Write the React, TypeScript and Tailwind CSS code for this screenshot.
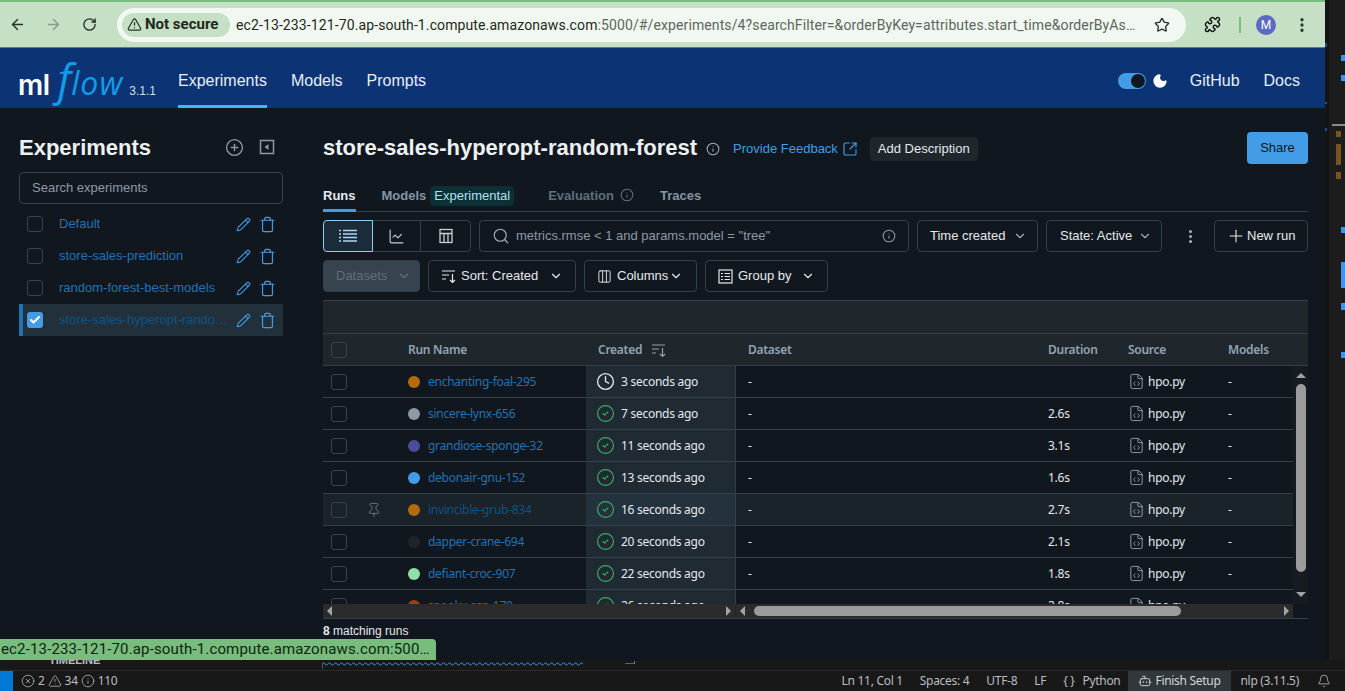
import React from "react";
import {
  ArrowLeft,
  ArrowRight,
  RotateCw,
  TriangleAlert,
  Star,
  Puzzle,
  EllipsisVertical,
  Moon,
  CirclePlus,
  Pencil,
  Trash,
  Info,
  SquareArrowOutUpRight,
  ChartLine,
  Search,
  ChevronDown,
  Plus,
  Columns3,
  Check,
  CircleCheck,
  Clock,
  Pin,
  FileCode,
  CircleX,
  Bell,
  Bot,
} from "lucide-react";

const experiments = [
  { name: "Default" },
  { name: "store-sales-prediction" },
  { name: "random-forest-best-models" },
  { name: "store-sales-hyperopt-random-forest", active: true },
];

const runs = [
  { name: "enchanting-foal-295", color: "bg-[#b36b0e]", created: "3 seconds ago", duration: "", running: true },
  { name: "sincere-lynx-656", color: "bg-[#8d9aa6]", created: "7 seconds ago", duration: "2.6s" },
  { name: "grandiose-sponge-32", color: "bg-[#4a4c9c]", created: "11 seconds ago", duration: "3.1s" },
  { name: "debonair-gnu-152", color: "bg-[#429de6]", created: "13 seconds ago", duration: "1.6s" },
  { name: "invincible-grub-834", color: "bg-[#b36b0e]", created: "16 seconds ago", duration: "2.7s", hover: true },
  { name: "dapper-crane-694", color: "bg-[#1f242b]", created: "20 seconds ago", duration: "2.1s" },
  { name: "defiant-croc-907", color: "bg-[#8fdfa6]", created: "22 seconds ago", duration: "1.8s" },
  { name: "spooky-asp-179", color: "bg-[#a63c0e]", created: "26 seconds ago", duration: "2.8s" },
];

const Tri = ({ dir }: { dir: "up" | "down" | "left" | "right" }) => {
  const points = {
    up: "0,8 5,3 10,8",
    down: "0,2 5,7 10,2",
    left: "7,0 2,5 7,10",
    right: "3,0 8,5 3,10",
  }[dir];
  return (
    <svg width="10" height="10" viewBox="0 0 10 10" className="shrink-0">
      <polygon points={points} fill="#a3a3a3" />
    </svg>
  );
};

const SortIcon = () => (
  <svg width="16" height="16" viewBox="0 0 16 16" fill="none" stroke="currentColor" strokeWidth="1.2" className="shrink-0">
    <path d="M1 3h13M1 7h7M1 11h4M11.5 6v8.5M9 12l2.5 2.5L14 12" />
  </svg>
);

const CollapseIcon = () => (
  <svg width="16" height="16" viewBox="0 0 16 16" fill="none" stroke="currentColor" strokeWidth="1.5">
    <rect x="1.5" y="1.5" width="13" height="13" />
    <polygon points="9.5,5 5.5,8 9.5,11" fill="currentColor" stroke="none" />
  </svg>
);

const ListIcon = () => (
  <svg width="18" height="16" viewBox="0 0 18 16" fill="none" stroke="currentColor" strokeWidth="1.3">
    <path d="M4 2.5h14M4 6h14M4 9.5h14M4 13h14" />
    <path d="M0 2.5h2M0 6h2M0 9.5h2M0 13h2" />
  </svg>
);

const TableIcon = () => (
  <svg width="16" height="16" viewBox="0 0 16 16" fill="none" stroke="currentColor" strokeWidth="1.3">
    <rect x="2" y="1.5" width="12" height="13" />
    <path d="M2 5.5h12M6 5.5v9M10 5.5v9" />
  </svg>
);

const GroupIcon = () => (
  <svg width="15" height="15" viewBox="0 0 15 15" fill="none" stroke="currentColor" strokeWidth="1.2" className="shrink-0">
    <rect x="1" y="1" width="13" height="13" />
    <path d="M3 4.5h2M3 7.5h2M3 10.5h2M6.5 4.5h5.5M6.5 7.5h5.5M6.5 10.5h5.5" />
  </svg>
);

const Outline = ({ className = "", children }: { className?: string; children: React.ReactNode }) => (
  <div className={`flex items-center h-8 rounded border border-[#333f4a] text-[13px] text-[#e5e9ec] whitespace-nowrap ${className}`}>
    {children}
  </div>
);

const Box = ({ className = "" }: { className?: string }) => (
  <div className={`w-4 h-4 rounded-[3px] border border-[#38424c] shrink-0 ${className}`} />
);

const ChromeBar = () => (
  <div className="h-12 shrink-0 bg-[#c5e0c5] border-t-2 border-[#78bd7d] border-b border-b-[#5f7d72] flex items-center font-['Roboto',sans-serif]">
    <ArrowLeft size={17} strokeWidth={2} className="ml-[9px] text-[#2a332b]" />
    <ArrowRight size={17} strokeWidth={2} className="ml-[19px] text-[#8b9a8b]" />
    <RotateCw size={15} strokeWidth={2.2} className="ml-[20px] text-[#2a332b]" />
    <div className="ml-[20px] w-[1069px] h-[34px] rounded-full bg-[#f1f8f1] flex items-center pl-[5px]">
      <div className="h-6 w-[108px] rounded-full bg-[#c5e0c5] flex items-center pl-[5px] gap-[3px] shrink-0">
        <TriangleAlert size={15} strokeWidth={2} className="text-[#2a332b]" />
        <span className="text-[15px] font-bold text-[#1f2820] whitespace-nowrap">Not secure</span>
      </div>
      <div className="ml-[6px] whitespace-nowrap text-sm tracking-[0.11px]">
        <span className="text-[#1f2820]">ec2-13-233-121-70.ap-south-1.compute.amazonaws.com</span>
        <span className="text-[#5d675e]">:5000/#/experiments/4?searchFilter=&amp;orderByKey=attributes.start_time&amp;orderByAs…</span>
      </div>
      <Star size={16} strokeWidth={2} className="ml-auto mr-[16px] text-[#2a332b] shrink-0" />
    </div>
    <Puzzle size={17} strokeWidth={2} className="ml-[18px] text-[#111]" />
    <div className="ml-[18px] w-0.5 h-4 bg-[#78bd7d]" />
    <div className="ml-[15px] w-5 h-5 rounded-full bg-[#5c6bc0] text-white text-xs flex items-center justify-center">M</div>
    <EllipsisVertical size={18} strokeWidth={2.4} className="ml-[17px] text-[#2a332b]" />
  </div>
);

const TopNav = () => (
  <div className="h-[60px] shrink-0 bg-[#0c3474] flex items-center pt-[6px] text-base text-[#e8eef4]">
    <div className="w-[178px] pl-[18px] -mt-[6px] flex items-baseline shrink-0 whitespace-nowrap">
      <span className="text-[28px] leading-none font-semibold text-white font-['Inter',sans-serif] tracking-[-0.5px]">ml</span>
      <span className="ml-[8px] text-[44px] leading-none italic text-[#129be8] font-['Open_Sans',sans-serif]">f</span>
      <span className="text-[32px] leading-none italic font-medium text-[#129be8] font-['Open_Sans',sans-serif] tracking-[1px]">low</span>
      <span className="ml-[6px] text-xs text-[#d5dde6]">3.1.1</span>
    </div>
    <div className="h-full flex items-center border-b-[3px] border-[#37bdf2] pt-[3px]">Experiments</div>
    <div className="ml-6">Models</div>
    <div className="ml-6">Prompts</div>
    <div className="ml-auto flex items-center">
      <div className="w-7 h-4 rounded-full bg-[#429de6] flex items-center justify-end pr-px">
        <div className="w-[14px] h-[14px] rounded-full bg-[#11171f]" />
      </div>
      <Moon size={16} fill="white" className="ml-[6px] text-white" />
      <span className="ml-[22px]">GitHub</span>
      <span className="ml-6 mr-[25px]">Docs</span>
    </div>
  </div>
);

const Sidebar = () => (
  <div className="w-[323px] shrink-0 pl-[19px] pr-10 pt-[23px]">
    <div className="flex items-center justify-between pr-2 h-8">
      <h2 className="text-[22px] font-bold text-[#eef1f3]">Experiments</h2>
      <div className="flex items-center gap-[15px] text-[#8d9aa6]">
        <CirclePlus size={19} strokeWidth={1.7} />
        <CollapseIcon />
      </div>
    </div>
    <div className="mt-[9px] h-8 rounded border border-[#38424c] pl-3 flex items-center text-[13px] text-[#8d9aa6]">Search experiments</div>
    <div className="mt-[4px]">
      {experiments.map((e) => (
        <div
          key={e.name}
          className={`h-8 flex items-center text-[13px] ${e.active ? "bg-[#22303c] border-l-4 border-[#2272b4] pl-1" : "pl-2"}`}
        >
          {e.active ? (
            <div className="w-4 h-4 rounded-[3px] bg-[#429de6] flex items-center justify-center shrink-0">
              <Check size={12} strokeWidth={4} className="text-white" />
            </div>
          ) : (
            <Box />
          )}
          <span className={`ml-4 w-[171px] truncate ${e.active ? "text-[#0d5483]" : "text-[#2272b4]"}`}>{e.name}</span>
          <Pencil size={15} strokeWidth={1.7} className="ml-[6px] text-[#429de6] shrink-0" />
          <Trash size={17} strokeWidth={1.7} className="ml-[8px] text-[#429de6] shrink-0" />
        </div>
      ))}
    </div>
  </div>
);

const RunsTable = () => (
  <div className="mt-2 h-[319px] flex flex-col border-b border-[#333f4a] relative font-['Noto_Sans',sans-serif] text-xs tracking-[-0.27px]">
    <div className="h-[34px] shrink-0 bg-[#1f272d] border-t border-b border-[#333f4a]" />
    <div className="h-8 shrink-0 bg-[#1f272d] border-b border-[#333f4a] flex items-center font-semibold text-[#92a4b3]">
      <div className="w-[85px] pl-2">
        <Box />
      </div>
      <div className="w-[178px]">Run Name</div>
      <div className="w-[150px] pl-3 flex items-center gap-[9px]">
        Created
        <SortIcon />
      </div>
      <div className="w-[312px] pl-3">Dataset</div>
      <div className="w-20">Duration</div>
      <div className="w-[100px]">Source</div>
      <div>Models</div>
    </div>
    <div className="h-[238px] shrink-0 overflow-hidden pr-[15px]">
      {runs.map((r) => (
        <div
          key={r.name}
          className={`h-8 flex items-center border-b border-[#333f4a] text-[#e5e9ec] ${r.hover ? "bg-[#1a222a]" : ""}`}
        >
          <div className="w-[45px] pl-2 shrink-0">
            <Box />
          </div>
          <div className="w-10 shrink-0">
            {r.hover && <Pin size={16} strokeWidth={1.4} className="ml-[-2px] text-[#6b7885]" />}
          </div>
          <div className="w-[178px] shrink-0 flex items-center">
            <div className={`w-3 h-3 rounded-full shrink-0 ${r.color}`} />
            <span className={`ml-2 ${r.hover ? "text-[#0d5483]" : "text-[#2272b4]"}`}>{r.name}</span>
          </div>
          <div className={`w-[150px] shrink-0 h-full pl-[10px] flex items-center gap-[6px] border-r border-[#333f4a] ${r.hover ? "bg-[#24323d]" : "bg-[#1f2a33]"}`}>
            {r.running ? (
              <Clock size={19} strokeWidth={1.7} className="text-[#e5e9ec]" />
            ) : (
              <CircleCheck size={19} strokeWidth={1.5} className="text-[#3caa60]" />
            )}
            {r.created}
          </div>
          <div className="w-[312px] shrink-0 pl-3">-</div>
          <div className="w-20 shrink-0">{r.duration}</div>
          <div className="w-[100px] shrink-0 flex items-center gap-[3px]">
            <FileCode size={17} strokeWidth={1.4} className="text-[#8d9aa6]" />
            <span>hpo.py</span>
          </div>
          <div>-</div>
        </div>
      ))}
    </div>
    {/* native scrollbars sit on top of the grid */}
    <div className="absolute right-0 top-[66px] bottom-[14px] w-[15px] bg-[#161b21] flex flex-col items-center justify-between pt-1 pb-1">
      <Tri dir="up" />
      <div className="w-[10px] flex-1 mt-1 mb-[18px] rounded-full bg-[#9b9b9b]" />
      <Tri dir="down" />
    </div>
    <div className="absolute left-0 right-[15px] bottom-0 h-[14px] bg-[#2b2b2b] flex items-center">
      <div className="w-[413px] shrink-0 flex items-center justify-between px-[2px] border-r border-[#222]">
        <Tri dir="left" />
        <Tri dir="right" />
      </div>
      <div className="flex-1 flex items-center px-[2px]">
        <Tri dir="left" />
        <div className="ml-[6px] w-[427px] h-[10px] rounded-full bg-[#9b9b9b]" />
        <div className="flex-1" />
        <Tri dir="right" />
      </div>
    </div>
  </div>
);

const MainPanel = () => (
  <div className="w-[985px] shrink-0 pt-[24px] text-[13px]">
    <div className="flex items-start h-8">
      <h1 className="text-[22px] leading-8 font-bold text-[#eef1f3] whitespace-nowrap">store-sales-hyperopt-random-forest</h1>
      <div className="h-8 mt-px flex items-center">
        <Info size={14} strokeWidth={1.8} className="ml-[9px] text-[#a3aeb8]" />
        <span className="ml-[13px] text-[#429de6]">Provide Feedback</span>
        <SquareArrowOutUpRight size={16} strokeWidth={1.7} className="ml-[4px] text-[#429de6]" />
        <div className="ml-[12px] h-6 px-2 rounded bg-[#1f272d] flex items-center text-[#e5e9ec]">Add Description</div>
      </div>
      <div className="ml-auto h-8 w-[61px] rounded bg-[#429de6] text-[#11171c] flex items-center justify-center">Share</div>
    </div>
    <div className="mt-[15px] h-[33px] border-b border-[#333f4a] flex font-bold text-[#6f7f8d]">
      <div className="h-[33px] pt-[7px] border-b-[3px] border-[#429de6] text-[#e5e9ec]">Runs</div>
      <div className="ml-[26px] pt-[7px] text-[#8396a5]">Models</div>
      <div className="ml-1 mt-[7px] h-5 px-1 rounded bg-[#0d2f36] text-[#a9e3f5] font-normal flex items-center">Experimental</div>
      <div className="ml-[34px] pt-[7px] text-[#5f6f7c] flex items-start gap-[6px]">
        Evaluation
        <Info size={14} strokeWidth={1.8} className="mt-[2px]" />
      </div>
      <div className="ml-[26px] pt-[7px] text-[#8396a5]">Traces</div>
    </div>
    <div className="mt-2 flex items-center">
      <div className="flex h-8 w-[148px] rounded border border-[#333f4a]">
        <div className="w-[50px] -m-px rounded-l border border-[#8fcdf5] bg-[#1c2b3a] flex items-center justify-center text-[#a9d8f7]">
          <ListIcon />
        </div>
        <div className="w-12 ml-px border-r border-[#333f4a] flex items-center justify-center text-[#c8d0d6]">
          <ChartLine size={17} strokeWidth={1.6} />
        </div>
        <div className="flex-1 flex items-center justify-center text-[#c8d0d6]">
          <TableIcon />
        </div>
      </div>
      <Outline className="ml-2 w-[430px] pl-[12px] pr-[13px]">
        <Search size={18} strokeWidth={1.5} className="text-[#a3aeb8]" />
        <span className="ml-[6px] text-[#8d9aa6]">metrics.rmse &lt; 1 and params.model = "tree"</span>
        <Info size={14} strokeWidth={1.8} className="ml-auto -mr-[1px] text-[#8d9aa6]" />
      </Outline>
      <Outline className="ml-2 w-[121px] pl-3 pr-[10px] justify-between">
        Time created
        <ChevronDown size={14} className="text-[#a3aeb8]" />
      </Outline>
      <Outline className="ml-2 w-[116px] pl-[13px] pr-[9px] justify-between">
        State: Active
        <ChevronDown size={14} className="text-[#a3aeb8]" />
      </Outline>
      <EllipsisVertical size={17} strokeWidth={2.4} className="ml-[20px] text-[#a3aeb8]" />
      <Outline className="ml-auto w-[94px] pl-[11px] gap-px">
        <Plus size={20} strokeWidth={1.3} />
        New run
      </Outline>
    </div>
    <div className="mt-2 flex items-center">
      <div className="w-[97px] h-8 rounded bg-[#37444f] border border-[#333f4a] text-[#5f6f7c] flex items-center justify-between pl-3 pr-2">
        Datasets
        <ChevronDown size={14} />
      </div>
      <Outline className="ml-2 w-[148px] pl-3 pr-3">
        <SortIcon />
        <span className="ml-[4px]">Sort: Created</span>
        <ChevronDown size={14} className="ml-auto" />
      </Outline>
      <Outline className="ml-2 w-[113px] pl-3">
        <Columns3 size={15} strokeWidth={1.5} />
        <span className="ml-[5px]">Columns</span>
        <ChevronDown size={14} className="ml-px" />
      </Outline>
      <Outline className="ml-2 w-[123px] pl-3 pr-3">
        <GroupIcon />
        <span className="ml-[5px]">Group by</span>
        <ChevronDown size={14} className="ml-auto" />
      </Outline>
    </div>
    <RunsTable />
    <div className="mt-[4px] text-xs text-[#e5e9ec]">
      <b>8</b> matching runs
    </div>
  </div>
);

const Minimap = () => (
  <svg width="20" height="660" viewBox="0 0 20 660" className="shrink-0 bg-[#1c1c1c]">
    <rect x="0" y="0" width="4" height="660" fill="#141414" />
    <rect x="7" y="124" width="13" height="2" fill="#8a8a8a" />
    <rect x="11" y="131" width="5" height="6" fill="#7a5420" />
    <rect x="11" y="144" width="5" height="21" fill="#7a5420" />
    <rect x="11" y="172" width="5" height="7" fill="#7a5420" />
    <rect x="16" y="55" width="4" height="6" fill="#3d94ee" />
    <rect x="16" y="75" width="4" height="6" fill="#3d94ee" />
    <rect x="16" y="227" width="4" height="6" fill="#3d94ee" />
    <rect x="16" y="262" width="4" height="26" fill="#3d94ee" />
    <rect x="16" y="303" width="4" height="7" fill="#3d94ee" />
    <rect x="16" y="352" width="4" height="6" fill="#3d94ee" />
    <rect x="0" y="43" width="2" height="4" fill="#1f4f8f" />
    <rect x="0" y="102" width="2" height="2" fill="#1f4f8f" />
    <rect x="0" y="128" width="2" height="3" fill="#1f4f8f" />
  </svg>
);

// squiggle under the editor line, poking out below the browser window
const Squiggle = () => (
  <svg width="320" height="9" viewBox="0 0 320 9" className="absolute left-[322px] top-0">
    <defs>
      <pattern id="wave" width="6" height="4" patternUnits="userSpaceOnUse" y="2">
        <path d="M0 2 Q1.5 0 3 2 T6 2" fill="none" stroke="#2f78c4" strokeWidth="1.1" />
      </pattern>
    </defs>
    <rect x="0" y="2" width="261" height="4" fill="url(#wave)" />
    <rect x="0" y="3" width="1" height="6" fill="#555" />
    <rect x="303" y="3" width="9" height="1" fill="#3d6a99" />
    <rect x="312" y="1" width="1" height="3" fill="#777" />
  </svg>
);

const StatusBar = () => (
  <div className="h-5 shrink-0 bg-[#181818] flex items-center text-xs tracking-[-0.3px] text-[#b9bec2] font-['Noto_Sans',sans-serif] whitespace-nowrap">
    <div className="w-[13px] h-full bg-[#0078d4]" />
    <div className="ml-2 flex items-center gap-[3px]">
      <CircleX size={14} strokeWidth={1.3} />
      <span>2</span>
      <TriangleAlert size={14} strokeWidth={1.3} />
      <span>34</span>
      <Info size={14} strokeWidth={1.3} />
      <span>110</span>
    </div>
    <div className="ml-auto flex items-center h-full">
      <span>Ln 11, Col 1</span>
      <span className="ml-[17px]">Spaces: 4</span>
      <span className="ml-[17px]">UTF-8</span>
      <span className="ml-[17px]">LF</span>
      <span className="ml-[17px]">{"{ }"}</span>
      <span className="ml-[8px]">Python</span>
      <div className="ml-[8px] h-full w-[103px] bg-[#31373b] flex items-center gap-[3px] pl-[10px] text-[#d4d8db]">
        <Bot size={14} strokeWidth={1.6} />
        Finish Setup
      </div>
      <span className="ml-[9px]">nlp (3.11.5)</span>
      <Bell size={14} strokeWidth={1.4} className="ml-[18px] mr-[14px]" />
    </div>
  </div>
);

export default function App() {
  return (
    <div className="relative w-[1345px] h-[691px] overflow-hidden flex flex-col bg-[#181818] font-['Liberation_Sans',sans-serif]">
      <div className="flex h-[660px] shrink-0">
        <div className="w-[1325px] shrink-0 flex flex-col bg-[#11171f]">
          <ChromeBar />
          <TopNav />
          <div className="flex flex-1 min-h-0">
            <Sidebar />
            <MainPanel />
          </div>
        </div>
        <Minimap />
      </div>
      <div className="h-[11px] shrink-0 bg-[#181818] border-b border-[#2b2b2b] relative text-[11px] leading-none font-bold text-[#b9bec2]">
        <span className="absolute left-[49px] -top-[5px]">TIMELINE</span>
        <Squiggle />
      </div>
      <StatusBar />
      {/* link preview bubble from the browser */}
      <div className="absolute left-0 top-[639px] w-[436px] h-[21px] rounded-tr bg-[#78bd7d] text-[#10240f] text-[15px] tracking-[0.15px] flex items-center pl-px font-['Roboto',sans-serif] whitespace-nowrap">
        ec2-13-233-121-70.ap-south-1.compute.amazonaws.com:500…
      </div>
    </div>
  );
}
